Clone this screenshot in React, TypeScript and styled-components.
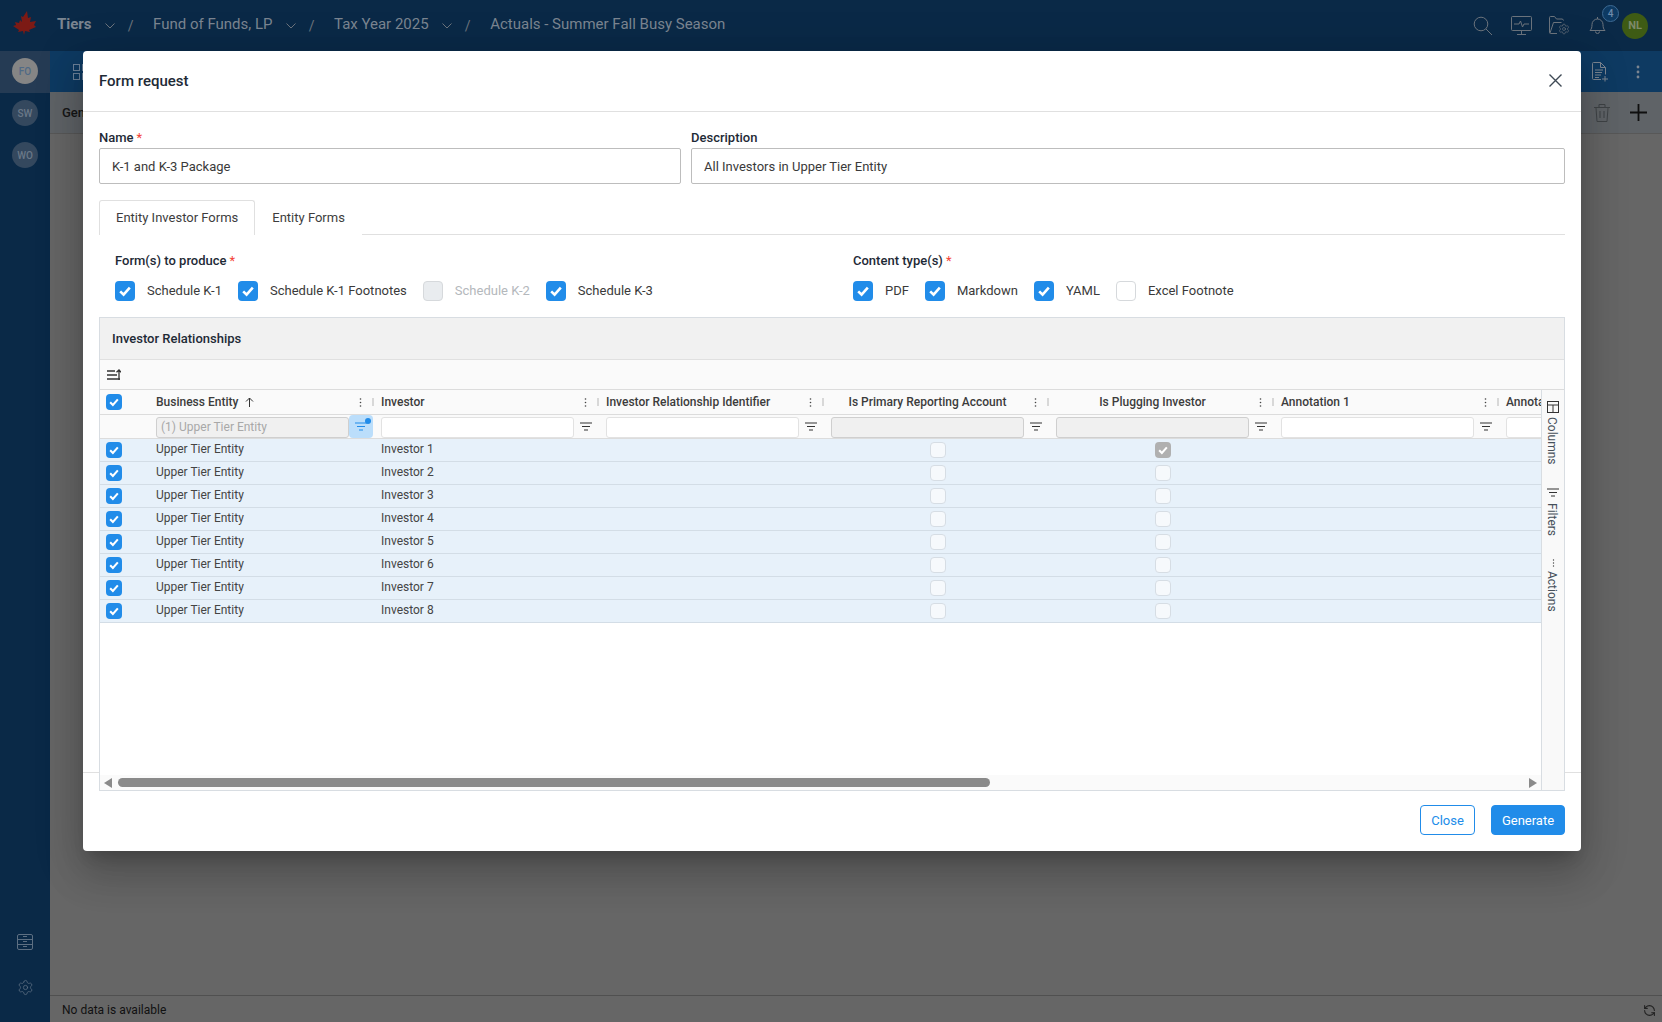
import React from "react";
import styled, { createGlobalStyle } from "styled-components";
import { RefreshCcw, Settings } from "lucide-react";

const Global = createGlobalStyle`
  html, body { margin: 0; padding: 0; height: 100%; background: #666; }
  #root { height: 100%; }
  * { box-sizing: border-box; }
  body { font-family: Roboto, "Liberation Sans", sans-serif; font-size: 13px; color: #333; }
`;

const Page = styled.div`
  position: relative;
  width: 100%;
  height: 100vh;
  overflow: hidden;
  display: flex;
  flex-direction: column;
  background: #666;
`;

const TopBar = styled.header`
  flex: 0 0 51px;
  display: flex;
  align-items: center;
  background: #0a2947;
  color: #7b8591;
  padding: 0 8px 3px 13px;
`;
const Logo = styled.svg`
  width: 24px;
  height: 24px;
  margin-right: 20px;
  margin-bottom: 3px;
  flex: none;
`;
const Crumb = styled.span<{ $strong?: boolean }>`
  font-size: 15px;
  font-weight: ${(p) => (p.$strong ? 700 : 400)};
  line-height: 20px;
  white-space: nowrap;
`;
const Chevron = styled.svg`
  width: 10px;
  height: 6px;
  margin-left: 13px;
  margin-top: 3px;
  flex: none;
`;
const Slash = styled.span`
  width: 6px;
  margin-left: 13px;
  margin-right: 19.5px;
  margin-top: 3px;
  font-size: 14px;
  text-align: center;
  color: #6c747d;
`;
const TopIcons = styled.div`
  margin-left: auto;
  display: flex;
  align-items: center;
  margin-top: 3px;
`;
const TopIcon = styled.div`
  position: relative;
  width: 38px;
  height: 26px;
  display: flex;
  align-items: center;
  justify-content: center;
`;
const Badge = styled.span`
  position: absolute;
  left: 24px;
  top: -8px;
  width: 17px;
  height: 17px;
  border-radius: 50%;
  border: 1px solid #3d6a93;
  background: #0d3a63;
  color: #6f8cab;
  font-size: 10px;
  font-weight: 500;
  display: flex;
  align-items: center;
  justify-content: center;
`;
const Avatar = styled.span`
  width: 26px;
  height: 26px;
  border-radius: 50%;
  background: #3e5b14;
  color: #7d8a6a;
  font-size: 11px;
  font-weight: 700;
  display: flex;
  align-items: center;
  justify-content: center;
`;

const Content = styled.div`
  flex: 1;
  min-height: 0;
  display: flex;
`;
const Sidebar = styled.nav`
  flex: 0 0 50px;
  display: flex;
  flex-direction: column;
  background: #0a2947;
`;
const SideItem = styled.div<{ $active?: boolean }>`
  height: 42px;
  padding-bottom: 2px;
  display: flex;
  align-items: center;
  justify-content: center;
  background: ${(p) => (p.$active ? "#253b54" : "transparent")};
`;
const SideAvatar = styled.span<{ $active?: boolean }>`
  width: 26px;
  height: 26px;
  border-radius: 50%;
  background: ${(p) => (p.$active ? "#858585" : "#34485e")};
  color: ${(p) => (p.$active ? "#4f6a86" : "#6a7888")};
  font-size: 10px;
  font-weight: 500;
  display: flex;
  align-items: center;
  justify-content: center;
`;
const SideBottom = styled.div`
  margin-top: auto;
  display: flex;
  flex-direction: column;
  align-items: center;
  gap: 29px;
  padding-bottom: 26px;
  color: #5d6f82;
`;
const Main = styled.main`
  flex: 1;
  min-width: 0;
  display: flex;
  flex-direction: column;
`;
const SubBar = styled.div`
  flex: 0 0 41px;
  display: flex;
  align-items: center;
  justify-content: space-between;
  background: #0e3a62;
  padding: 0 22px 0 23px;
`;
const SubActions = styled.div<{ $gap: number }>`
  display: flex;
  align-items: center;
  gap: ${(p) => p.$gap}px;
`;
const TitleBar = styled.div`
  flex: 0 0 42px;
  display: flex;
  align-items: center;
  justify-content: space-between;
  background: #5f6367;
  border-bottom: 1px solid #585858;
  padding: 0 15px 0 12px;
  font-size: 13px;
  font-weight: 500;
  color: #161616;
`;
const Blank = styled.div`
  flex: 1;
`;
const Status = styled.footer`
  flex: 0 0 27px;
  display: flex;
  align-items: center;
  justify-content: space-between;
  border-top: 1px solid #505050;
  padding: 2px 6px 0 12px;
  font-size: 12px;
  color: #111;
`;

const Modal = styled.section`
  position: absolute;
  left: 83px;
  top: 51px;
  width: 1498px;
  height: 800px;
  background: #fff;
  border-radius: 4px;
  display: flex;
  flex-direction: column;
  box-shadow: 0 11px 15px -7px rgba(0, 0, 0, 0.2), 0 24px 38px 3px rgba(0, 0, 0, 0.14), 0 9px 46px 8px rgba(0, 0, 0, 0.12);
`;
const ModalHeader = styled.div`
  flex: 0 0 61px;
  display: flex;
  align-items: center;
  justify-content: space-between;
  padding: 0 19px 1px 16px;
  border-bottom: 1px solid #e0e0e0;
`;
const ModalTitle = styled.h2`
  margin: 0;
  font-size: 15px;
  font-weight: 500;
  color: #1e2a36;
`;
const ModalBody = styled.div`
  flex: 0 0 660px;
  height: 660px;
  min-height: 0;
  padding: 18px 16px 0;
  position: relative;
  z-index: 1;
`;
const FieldRow = styled.div`
  display: grid;
  grid-template-columns: 582px 874px;
  column-gap: 10px;
`;
const FieldLabel = styled.label`
  display: block;
  font-size: 13px;
  font-weight: 500;
  line-height: 16px;
  color: #1e2a36;
`;
const Req = styled.span`
  color: #f44336;
  font-weight: 400;
  margin-left: 3px;
`;
const TextInput = styled.div`
  margin-top: 2px;
  height: 36px;
  border: 1px solid #bdbdbd;
  border-radius: 2px;
  padding: 0 12px;
  display: flex;
  align-items: center;
  font-size: 13px;
  color: #3a3a3a;
`;
const Tabs = styled.div`
  margin-top: 16px;
  height: 35px;
  display: flex;
  border-bottom: 1px solid #e0e0e0;
`;
const Tab = styled.div<{ $active?: boolean }>`
  height: 35px;
  padding: 0 16px 2px;
  display: flex;
  align-items: center;
  font-size: 13px;
  color: #3d3d3d;
  border-radius: 3px 3px 0 0;
  background: #fff;
  border: 1px solid ${(p) => (p.$active ? "#e0e0e0" : "transparent")};
  border-bottom: 0;
`;
const Options = styled.div`
  padding: 18px 16px 0;
  display: grid;
  grid-template-columns: 738px 1fr;
`;
const CheckRow = styled.div`
  margin-top: 12px;
  display: flex;
  align-items: center;
  gap: 16px;
`;
const CheckItem = styled.div<{ $disabled?: boolean }>`
  display: flex;
  align-items: center;
  gap: 12px;
  font-size: 13px;
  color: ${(p) => (p.$disabled ? "#b4b8bc" : "#3a3a3a")};
`;
const CheckText = styled.span`
  margin-top: -2px;
`;
const Box = styled.span<{ $on?: boolean; $size: number; $tone?: "primary" | "muted" | "disabled" | "light" }>`
  flex: none;
  width: ${(p) => p.$size}px;
  height: ${(p) => p.$size}px;
  border-radius: 4px;
  display: flex;
  align-items: center;
  justify-content: center;
  background: ${(p) =>
    p.$tone === "disabled" ? "#e9ecef" : p.$tone === "muted" ? "#b0b0b0" : p.$tone === "light" ? "#f6f9fc" : p.$on ? "#218ce9" : "#fff"};
  border: ${(p) =>
    p.$on || p.$tone === "muted" ? "none" : p.$tone === "light" ? "1px solid #d6dde4" : "1px solid #d6d9dc"};
`;

const DataGrid = styled.div`
  margin-top: 16px;
  height: 474px;
  border: 1px solid #d8dde2;
  background: #fff;
  display: flex;
  flex-direction: column;
`;
const GridTitle = styled.div`
  flex: 0 0 42px;
  display: flex;
  align-items: center;
  padding-left: 12px;
  background: #f1f1f1;
  border-bottom: 1px solid #e0e0e0;
  font-size: 13px;
  font-weight: 500;
  color: #1e2a36;
`;
const GridTools = styled.div`
  flex: 0 0 30px;
  display: flex;
  align-items: center;
  padding-left: 7px;
  background: #fafafa;
  border-bottom: 1px solid #dcdcdc;
`;
const GridArea = styled.div`
  flex: 1;
  min-height: 0;
  display: flex;
`;
const GridMain = styled.div`
  flex: 1;
  min-width: 0;
  overflow: hidden;
  display: flex;
  flex-direction: column;
`;
const Line = styled.div<{ $h: number; $bg: string; $border: string }>`
  flex: 0 0 ${(p) => p.$h}px;
  height: ${(p) => p.$h}px;
  display: flex;
  background: ${(p) => p.$bg};
  border-bottom: 1px solid ${(p) => p.$border};
`;
const SelectCell = styled.div`
  flex: 0 0 56px;
  padding-left: 6px;
  display: flex;
  align-items: center;
`;
const HeadCell = styled.div`
  flex: 0 0 225px;
  display: flex;
  align-items: center;
  font-size: 12px;
  font-weight: 500;
  color: #3c3c3c;
`;
const HeadLabel = styled.div<{ $center?: boolean }>`
  flex: 0 0 193px;
  display: flex;
  align-items: center;
  gap: 7px;
  white-space: nowrap;
  justify-content: ${(p) => (p.$center ? "center" : "flex-start")};
`;
const Kebab = styled.svg`
  width: 3px;
  height: 9px;
  margin-left: 10px;
  flex: none;
`;
const Resize = styled.span`
  width: 2px;
  height: 8px;
  margin-left: 10px;
  background: #d8d8d8;
  flex: none;
`;
const FilterCell = styled.div`
  flex: 0 0 225px;
  display: flex;
  align-items: center;
`;
const FilterInput = styled.div<{ $disabled?: boolean }>`
  flex: 0 0 193px;
  height: 21px;
  margin-top: 1px;
  border-radius: 3px;
  padding: 0 4px;
  font-size: 12px;
  line-height: 19px;
  color: #a8a8a8;
  background: ${(p) => (p.$disabled ? "#f0f0f0" : "#fff")};
  border: 1px solid ${(p) => (p.$disabled ? "#cfcfcf" : "#e2e2e2")};
`;
const FilterBtn = styled.div<{ $active?: boolean }>`
  position: relative;
  flex: 0 0 24px;
  height: 23px;
  border-radius: 4px;
  display: flex;
  align-items: center;
  justify-content: center;
  background: ${(p) => (p.$active ? "#bbdefb" : "transparent")};
`;
const FilterDot = styled.span`
  position: absolute;
  right: 2px;
  top: 3px;
  width: 6px;
  height: 6px;
  border-radius: 50%;
  background: #218ce9;
`;
const BodyCell = styled.div`
  flex: 0 0 225px;
  display: flex;
  align-items: center;
  padding-bottom: 2px;
  font-size: 12px;
  color: #444;
`;
const BoolCell = styled.div`
  flex: 0 0 225px;
  display: flex;
  align-items: center;
  padding-left: 99px;
`;
const ScrollTrack = styled.div`
  margin-top: auto;
  flex: 0 0 15px;
  display: flex;
  align-items: center;
  background: #fafafa;
  padding: 0 4px;
`;
const ArrowLeft = styled.span`
  width: 0;
  height: 0;
  border-top: 5px solid transparent;
  border-bottom: 5px solid transparent;
  border-right: 8px solid #8a8a8a;
`;
const ArrowRight = styled.span`
  margin-left: auto;
  width: 0;
  height: 0;
  border-top: 5px solid transparent;
  border-bottom: 5px solid transparent;
  border-left: 8px solid #8a8a8a;
`;
const Thumb = styled.span`
  margin-left: 6px;
  width: 872px;
  height: 9px;
  border-radius: 5px;
  background: #8a8a8a;
`;
const SidePanel = styled.aside`
  flex: 0 0 23px;
  border-left: 1px solid #d8dde2;
  background: #f9f9f9;
  padding-top: 11px;
  display: flex;
  flex-direction: column;
  align-items: center;
  gap: 23px;
`;
const SideTab = styled.div<{ $gap: number }>`
  display: flex;
  flex-direction: column;
  align-items: center;
  gap: ${(p) => p.$gap}px;
  font-size: 12px;
  color: #46505a;
`;
const VerticalText = styled.span`
  writing-mode: vertical-rl;
  line-height: 14px;
  margin-right: 3px;
`;
const ModalFooter = styled.div`
  flex: 1;
  border-top: 1px solid #e0e0e0;
  padding: 32px 16px 0;
  display: flex;
  justify-content: flex-end;
  align-items: flex-start;
  gap: 16px;
`;
const Button = styled.button<{ $primary?: boolean }>`
  height: 30px;
  width: ${(p) => (p.$primary ? 74 : 55)}px;
  padding: 0;
  border-radius: 4px;
  border: 1px solid #218ce9;
  background: ${(p) => (p.$primary ? "#218ce9" : "#fff")};
  color: ${(p) => (p.$primary ? "#fff" : "#218ce9")};
  font-family: inherit;
  font-size: 13px;
  font-weight: 400;
`;

const Check = ({ size, color = "#fff" }: { size: number; color?: string }) => (
  <svg width={size} height={size} viewBox="0 0 20 20" fill="none">
    <path d="M5.2 10.3l3.4 3.4 6.2-7" stroke={color} strokeWidth="2.6" />
  </svg>
);

const CheckBox = ({ on, size = 20, tone }: { on?: boolean; size?: number; tone?: "primary" | "muted" | "disabled" | "light" }) => (
  <Box $on={on} $size={size} $tone={tone}>
    {on ? <Check size={size} /> : null}
  </Box>
);

const ChevronIcon = () => (
  <Chevron viewBox="0 0 10 6" fill="none">
    <path d="M.5.5L5 5 9.500.5" stroke="#6c747d" />
  </Chevron>
);

const FilterIcon = ({ color = "#333" }: { color?: string }) => (
  <svg width="12" height="9" viewBox="0 0 12 9" fill="none" stroke={color} strokeWidth="1.1">
    <path d="M0 1h12M2 4.500h8M4 8h4" />
  </svg>
);

const KebabIcon = () => (
  <Kebab viewBox="0 0 3 9" fill="#444">
    <circle cx="1.500" cy="1" r=".8" />
    <circle cx="1.500" cy="4.500" r=".8" />
    <circle cx="1.500" cy="8" r=".8" />
  </Kebab>
);

const forms = [
  { label: "Schedule K-1", on: true },
  { label: "Schedule K-1 Footnotes", on: true },
  { label: "Schedule K-2", disabled: true },
  { label: "Schedule K-3", on: true },
];
const types = [
  { label: "PDF", on: true },
  { label: "Markdown", on: true },
  { label: "YAML", on: true },
  { label: "Excel Footnote" },
];
const columns = [
  { title: "Business Entity", sort: true, filter: "(1) Upper Tier Entity", off: true, active: true },
  { title: "Investor" },
  { title: "Investor Relationship Identifier" },
  { title: "Is Primary Reporting Account", center: true, off: true },
  { title: "Is Plugging Investor", center: true, off: true },
  { title: "Annotation 1" },
  { title: "Annotation 2" },
];
const rows = [1, 2, 3, 4, 5, 6, 7, 8];

export default function App() {
  return (
    <>
      <Global />
      <Page>
        <TopBar>
          <Logo viewBox="0 0 24 24" fill="#7c1a15">
            <path d="M14 0l1 7 3-1-1 5 6-1-2 4 2 2-7 3 1 2-5-1-1 4-1-4-5 1 1-2-6-4 3-1-1-3 4 1 1-3 2 2-1-6 2 1z" />
          </Logo>
          <Crumb $strong>Tiers</Crumb>
          <ChevronIcon />
          <Slash>/</Slash>
          <Crumb>Fund of Funds, LP</Crumb>
          <ChevronIcon />
          <Slash>/</Slash>
          <Crumb>Tax Year 2025</Crumb>
          <ChevronIcon />
          <Slash>/</Slash>
          <Crumb>Actuals - Summer Fall Busy Season</Crumb>
          <TopIcons>
            <TopIcon>
              <svg width="20" height="20" viewBox="0 0 20 20" fill="none" stroke="#6c747d">
                <circle cx="8" cy="8" r="6.800" />
                <path d="M13 13l6 6" />
              </svg>
            </TopIcon>
            <TopIcon>
              <svg width="21" height="19" viewBox="0 0 21 19" fill="none" stroke="#6c747d">
                <rect x=".5" y=".5" width="20" height="14" rx="1" />
                <path d="M3 8h5l1.500-3 2 6 1.500-3h5M10.500 15v3M6 18.500h9" />
              </svg>
            </TopIcon>
            <TopIcon>
              <svg width="21" height="19" viewBox="0 0 21 19" fill="none" stroke="#6c747d">
                <path d="M8 17.500H1.500a1 1 0 0 1-1-1V1.500a1 1 0 0 1 1-1h4l2 2.500h6l1 1.500" />
                <path d="M1 17L4.500 6.500h8" />
                <g color="#6c747d">
                  <Settings x={9} y={7} size={12} strokeWidth={1.3} />
                </g>
              </svg>
            </TopIcon>
            <TopIcon>
              <svg width="17" height="19" viewBox="0 0 17 19" fill="none" stroke="#6c747d">
                <path d="M1 14.500c1.500-1.500 2-3 2-6a5.500 5.500 0 0 1 11 0c0 3 .5 4.500 2 6zM6.500 15.500a2 2 0 0 0 4 0M8.500 1v2" />
              </svg>
              <Badge>4</Badge>
            </TopIcon>
            <TopIcon>
              <Avatar>NL</Avatar>
            </TopIcon>
          </TopIcons>
        </TopBar>
        <Content>
          <Sidebar>
            <SideItem $active>
              <SideAvatar $active>FO</SideAvatar>
            </SideItem>
            <SideItem>
              <SideAvatar>SW</SideAvatar>
            </SideItem>
            <SideItem>
              <SideAvatar>WO</SideAvatar>
            </SideItem>
            <SideBottom>
              <svg width="16" height="16" viewBox="0 0 16 16" fill="none" stroke="currentColor">
                <rect x=".5" y=".5" width="15" height="15" rx="1.500" />
                <path d="M.5 5.500h15M.5 10.500h15M6 2.500h4M6 7.500h4M6 12.500h4" />
              </svg>
              <Settings size={17} strokeWidth={1.1} />
            </SideBottom>
          </Sidebar>
          <Main>
            <SubBar>
              <svg width="20" height="16" viewBox="0 0 20 16" fill="none" stroke="#6c8098">
                <rect x=".5" y=".5" width="6" height="6" />
                <rect x=".5" y="9.500" width="6" height="6" />
                <rect x="9.500" y=".5" width="6" height="6" />
                <rect x="9.500" y="9.500" width="6" height="6" />
              </svg>
              <SubActions $gap={28}>
                <svg width="16" height="20" viewBox="0 0 16 20" fill="none" stroke="#7b8591">
                  <path d="M9 17.500H1.500a1 1 0 0 1-1-1v-15a1 1 0 0 1 1-1h7l5 5v7M8.500.5v5h5M3 8h8M3 10.500h7M3 13h6M3 15.500h4M13 14v5.500M10 17h6" />
                </svg>
                <svg width="4" height="14" viewBox="0 0 4 14" fill="#7b8591">
                  <circle cx="2" cy="2" r="1.400" />
                  <circle cx="2" cy="7" r="1.400" />
                  <circle cx="2" cy="12" r="1.400" />
                </svg>
              </SubActions>
            </SubBar>
            <TitleBar>
              General
              <SubActions $gap={20}>
                <svg width="16" height="18" viewBox="0 0 16 18" fill="none" stroke="#3f4346">
                  <path d="M0 3.500h16M5 3V.5h6V3M2 4l1 13.500h10L14 4M6 7v7M10 7v7" />
                </svg>
                <svg width="17" height="17" viewBox="0 0 17 17" fill="none" stroke="#0f0f0f" strokeWidth="1.800">
                  <path d="M8.500 0v17M0 8.500h17" />
                </svg>
              </SubActions>
            </TitleBar>
            <Blank />
            <Status>
              No data is available
              <RefreshCcw size={13} color="#222" />
            </Status>
          </Main>
        </Content>

        <Modal>
          <ModalHeader>
            <ModalTitle>Form request</ModalTitle>
            <svg width="13" height="13" viewBox="0 0 13 13" fill="none" stroke="#3f4a55" strokeWidth="1.400">
              <path d="M.5.5l12 12M12.500.5l-12 12" />
            </svg>
          </ModalHeader>
          <ModalBody>
            <FieldRow>
              <div>
                <FieldLabel>
                  Name<Req>*</Req>
                </FieldLabel>
                <TextInput>K-1 and K-3 Package</TextInput>
              </div>
              <div>
                <FieldLabel>Description</FieldLabel>
                <TextInput>All Investors in Upper Tier Entity</TextInput>
              </div>
            </FieldRow>
            <Tabs>
              <Tab $active>Entity Investor Forms</Tab>
              <Tab>Entity Forms</Tab>
            </Tabs>
            <Options>
              <div>
                <FieldLabel>
                  Form(s) to produce<Req>*</Req>
                </FieldLabel>
                <CheckRow>
                  {forms.map((f) => (
                    <CheckItem key={f.label} $disabled={f.disabled}>
                      <CheckBox on={f.on} tone={f.disabled ? "disabled" : undefined} />
                      <CheckText>{f.label}</CheckText>
                    </CheckItem>
                  ))}
                </CheckRow>
              </div>
              <div>
                <FieldLabel>
                  Content type(s)<Req>*</Req>
                </FieldLabel>
                <CheckRow>
                  {types.map((f) => (
                    <CheckItem key={f.label}>
                      <CheckBox on={f.on} />
                      <CheckText>{f.label}</CheckText>
                    </CheckItem>
                  ))}
                </CheckRow>
              </div>
            </Options>
            <DataGrid>
              <GridTitle>Investor Relationships</GridTitle>
              <GridTools>
                <svg width="14" height="12" viewBox="0 0 14 12" fill="none" stroke="#333" strokeWidth="1.300">
                  <path d="M0 2h8M0 6h10M0 10h13M12 11V1M9.500 3.200L12 1l2 2.200" />
                </svg>
              </GridTools>
              <GridArea>
                <GridMain>
                  <Line $h={25} $bg="#fafafa" $border="#dcdcdc">
                    <SelectCell>
                      <CheckBox on size={16} />
                    </SelectCell>
                    {columns.map((c) => (
                      <HeadCell key={c.title}>
                        <HeadLabel $center={c.center}>
                          {c.title}
                          {c.sort ? (
                            <svg width="9" height="10" viewBox="0 0 9 10" fill="none" stroke="#333">
                              <path d="M4.500 10V1M1 4.500L4.500 1 8 4.500" />
                            </svg>
                          ) : null}
                        </HeadLabel>
                        <KebabIcon />
                        <Resize />
                      </HeadCell>
                    ))}
                  </Line>
                  <Line $h={24} $bg="#fafafa" $border="#dcdcdc">
                    <SelectCell />
                    {columns.map((c) => (
                      <FilterCell key={c.title}>
                        <FilterInput $disabled={c.off}>{c.filter}</FilterInput>
                        <FilterBtn $active={c.active}>
                          <FilterIcon color={c.active ? "#218ce9" : "#333"} />
                          {c.active ? <FilterDot /> : null}
                        </FilterBtn>
                      </FilterCell>
                    ))}
                  </Line>
                  {rows.map((n) => (
                    <Line key={n} $h={23} $bg="#e7f1fa" $border="#d3dde6">
                      <SelectCell>
                        <CheckBox on size={16} />
                      </SelectCell>
                      <BodyCell>Upper Tier Entity</BodyCell>
                      <BodyCell>Investor {n}</BodyCell>
                      <BodyCell />
                      <BoolCell>
                        <CheckBox size={16} tone="light" />
                      </BoolCell>
                      <BoolCell>
                        <CheckBox size={16} on={n === 1} tone={n === 1 ? "muted" : "light"} />
                      </BoolCell>
                      <BodyCell />
                      <BodyCell />
                    </Line>
                  ))}
                  <ScrollTrack>
                    <ArrowLeft />
                    <Thumb />
                    <ArrowRight />
                  </ScrollTrack>
                </GridMain>
                <SidePanel>
                  <SideTab $gap={4}>
                    <svg width="12" height="12" viewBox="0 0 12 12" fill="none" stroke="#333">
                      <rect x=".5" y=".5" width="11" height="11" />
                      <path d="M.5 4h11M6 4v7.500" />
                    </svg>
                    <VerticalText>Columns</VerticalText>
                  </SideTab>
                  <SideTab $gap={6}>
                    <FilterIcon />
                    <VerticalText>Filters</VerticalText>
                  </SideTab>
                  <SideTab $gap={4}>
                    <svg width="3" height="8" viewBox="0 0 3 8" fill="#444">
                      <circle cx="1.500" cy="1" r=".7" />
                      <circle cx="1.500" cy="4" r=".7" />
                      <circle cx="1.500" cy="7" r=".7" />
                    </svg>
                    <VerticalText>Actions</VerticalText>
                  </SideTab>
                </SidePanel>
              </GridArea>
            </DataGrid>
          </ModalBody>
          <ModalFooter>
            <Button>Close</Button>
            <Button $primary>Generate</Button>
          </ModalFooter>
        </Modal>
      </Page>
    </>
  );
}
